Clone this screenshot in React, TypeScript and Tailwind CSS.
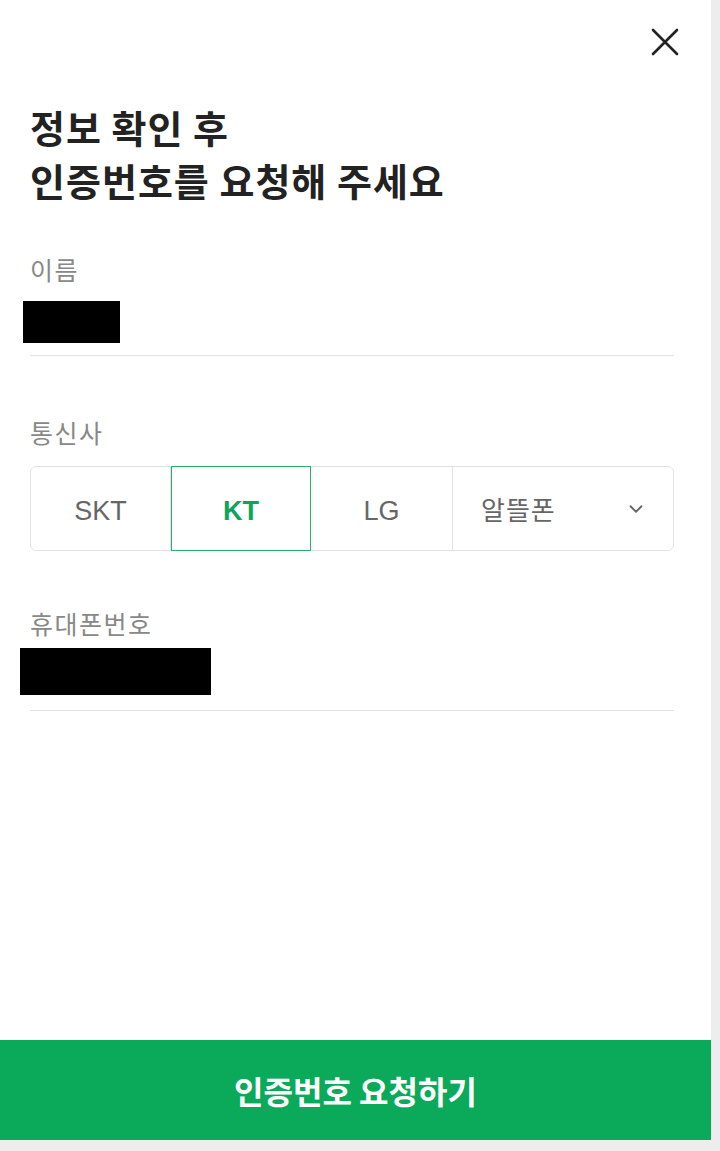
import { ChevronDown } from 'lucide-react';

const carriers = [
  { name: 'SKT', w: 'w-[140px]' },
  { name: 'KT', w: 'w-[140px]' },
  { name: 'LG', w: 'w-[142px]' },
];

export default function App() {
  const selected = 'KT';
  return (
    <div className="flex w-[720px] h-[1151px] bg-white font-['Noto_Sans_CJK_KR','Liberation_Sans',sans-serif]">
      <div className="flex flex-col w-[711px]">
        <div className="flex-1 flex flex-col bg-white">
          {/* close */}
          <div className="flex justify-end pt-[27px] pr-[31px] h-[100px]">
            <svg width="30" height="30" viewBox="0 0 30 30" fill="none" stroke="#222" strokeWidth="2.6" strokeLinecap="round">
              <path d="M3 3 L27 27 M27 3 L3 27" />
            </svg>
          </div>

          <div className="pl-[30px] pr-[37px]">
            <h1 className="text-[38px] leading-[53px] font-bold text-[#222] tracking-[1px]">
              정보 확인 후
              <br />
              인증번호를 요청해 주세요
            </h1>

            <div className="mt-[48px]">
              <p className="text-[25px] leading-[30px] text-[#888] tracking-[1.5px]">이름</p>
              <div className="mt-[17px] -ml-[7px] w-[97px] h-[42px] bg-black" />
              <div className="mt-[12px] border-b border-[#e3e3e3]" />
            </div>

            <div className="mt-[61px]">
              <p className="text-[25px] leading-[30px] text-[#888] tracking-[1.5px]">통신사</p>
              <div className="mt-[19px] flex h-[85px] rounded-[6px] border border-[#e2e2e2]">
                {carriers.map((c) =>
                  c.name === selected ? (
                    <div
                      key={c.name}
                      className={`${c.w} -my-px flex items-center justify-center border border-[#2aae6a] pt-[5px] font-['Liberation_Sans',sans-serif] text-[27px] font-bold text-[#0ca65a]`}
                    >
                      {c.name}
                    </div>
                  ) : (
                    <div
                      key={c.name}
                      className={`${c.w} flex items-center justify-center border-r border-[#e2e2e2] pt-[5px] font-['Liberation_Sans',sans-serif] text-[27px] text-[#666]`}
                    >
                      {c.name}
                    </div>
                  )
                )}
                <div className="flex-1 flex items-center justify-between pl-[28px] pr-[26px] text-[26px] tracking-[1px] text-[#666]">
                  <span>알뜰폰</span>
                  <ChevronDown size={22} strokeWidth={2} color="#666" />
                </div>
              </div>
            </div>

            <div className="mt-[57px]">
              <p className="text-[25px] leading-[30px] text-[#888] tracking-[1.5px]">휴대폰번호</p>
              <div className="mt-[10px] -ml-[10px] w-[191px] h-[47px] bg-black" />
              <div className="mt-[15px] border-b border-[#e3e3e3]" />
            </div>
          </div>
        </div>

        <button className="h-[100px] w-full bg-[#0baa5b] text-white text-[32px] font-bold">
          인증번호 요청하기
        </button>
        <div className="h-[11px] bg-[#ededed]" />
      </div>
      <div className="w-[9px] bg-[#ededed]" />
    </div>
  );
}
